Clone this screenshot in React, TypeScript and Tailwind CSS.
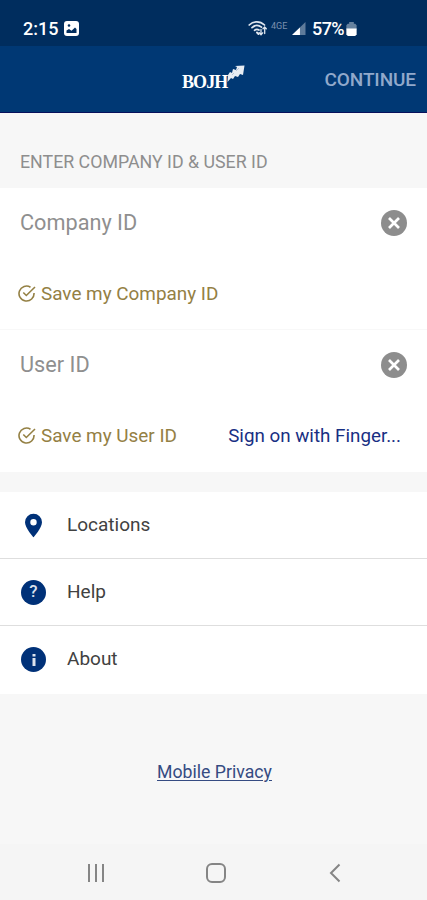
import type { ReactNode } from "react";

function StatusBar() {
  return (
    <div className="flex h-[46px] items-center bg-[#002d5e] pt-[11px] pl-[23px] text-white">
      <span className="w-[41px] text-[18px] font-medium whitespace-nowrap">2:15</span>
      <svg className="h-[15px] w-[15px]" viewBox="0 0 15 15">
        <rect width="15" height="15" rx="3" fill="#fff" />
        <circle cx="5" cy="4.5" r="1.3" fill="#002d5e" />
        <path d="M2.5 12V9.5L5 8l2.5 1.8L11 6.500l1.500 1.500V12z" fill="#002d5e" />
      </svg>
      <svg className="ml-[169px] h-[17px] w-[19px]" viewBox="0 0 19 17" fill="none" stroke="#dfe6ef" strokeLinecap="round">
        <path d="M1.200 5C5.500.8 12 .8 16.500 5M4 7.700c3-2.800 6.500-2.800 9.500-.5M6.500 10.300c1.500-1.300 3-1.300 4.500-.3" strokeWidth="1.700" />
        <path d="m9 12.500 1.500 1.500" strokeWidth="2" />
        <path d="M13 14.500v-5m-1.800 3.300 1.800 2 1.700-2M16.700 7v6.500M15 8.700 16.700 7l1.600 1.700" strokeWidth="1.300" />
      </svg>
      <span className="ml-[4px] h-[17px] w-[21px] text-[9px] leading-[12px] text-[#7c90ae]">4GE</span>
      <svg className="h-[13px] w-[14px]" viewBox="0 0 15 14">
        <path d="M0 14 14.500 0v14z" fill="#5e7b9b" />
        <path d="M0 14 8.500 5.800V14z" fill="#fff" />
      </svg>
      <span className="ml-[6px] w-[34px] text-[18px] font-medium tracking-[-0.6px] whitespace-nowrap">57%</span>
      <svg className="h-[14px] w-[11px]" viewBox="0 0 11 15">
        <path d="M3 0h5v2h1.500L11 3.500V8H0V3.500L1.500 2H3z" fill="#66829f" />
        <path d="M0 7h11v6l-1.500 2h-8L0 13z" fill="#fff" />
      </svg>
    </div>
  );
}

function Header() {
  return (
    <header className="flex h-[67px] items-center justify-between border-b border-[#08105b] bg-[#003874] pr-[11px] pl-[182px]">
      <div className="relative h-[36px] w-[64px] text-white">
        <span className="absolute top-[11px] left-0 font-['Liberation_Serif'] text-[18px] leading-[20px] font-bold tracking-[-0.9px]">
          BOJH
        </span>
        <svg className="absolute top-[4px] left-[45px] h-[17px] w-[18px]" viewBox="0 0 18 17" fill="#e6ecf3">
          <path d="m8 1 9.500-.5L16 10l-3-1-2 3-3-1-2 3-2-1-3.500 4L1 10l2-3 2 1 1-4 3 1 1-3z" />
          <path d="m9 6 3-3M5 10l2-2" stroke="#9fb3cc" strokeWidth=".7" />
        </svg>
      </div>
      <span className="pt-[2px] text-[19px] font-medium tracking-[-0.1px] text-[#91a9cb]">CONTINUE</span>
    </header>
  );
}

function Field({ label }: { label: string }) {
  return (
    <div className="flex h-[70px] items-center justify-between pr-[20px] pl-[20px]">
      <span className="pt-[1px] text-[21.7px] text-[#8f8f8f]">{label}</span>
      <svg className="h-[26px] w-[26px]" viewBox="0 0 26 26">
        <circle cx="13" cy="13" r="13" fill="#8d8d8d" />
        <path d="m8 8 10 10m0-10L8 18" stroke="#fff" strokeWidth="2.700" />
      </svg>
    </div>
  );
}

function SaveOption({ label }: { label: string }) {
  return (
    <div className="flex items-center gap-[5px] text-[#948044]">
      <svg className="h-[18px] w-[18px]" viewBox="0 0 18 18" fill="none" stroke="currentColor" strokeWidth="1.600">
        <path d="M12.500 2.200A7.500 7.500 0 1 0 16 8" />
        <path d="m5.300 7.500 3 3L17 2" />
      </svg>
      <span className="text-[18.900px] whitespace-nowrap">{label}</span>
    </div>
  );
}

function MenuRow({ icon, label }: { icon: ReactNode; label: string }) {
  return (
    <div className="flex h-[67px] items-center pl-[21px]">
      <div className="flex w-[46px]">{icon}</div>
      <span className="text-[19px] text-[#414141]">{label}</span>
    </div>
  );
}

function InfoCircle({ children }: { children: ReactNode }) {
  return (
    <div className="flex h-[25px] w-[25px] items-center justify-center rounded-full bg-[#003178] text-[#dce3ed]">
      {children}
    </div>
  );
}

function NavigationBar() {
  return (
    <nav className="flex h-[56px] items-center bg-[#f5f5f5] pt-[1px] pl-[87px] text-[#858585]">
      <svg className="h-[20px] w-[18px]" viewBox="0 0 18 20" stroke="currentColor" strokeWidth="2">
        <path d="M2 1v18M9 1v18M16 1v18" />
      </svg>
      <div className="ml-[101px] h-[20px] w-[20px] rounded-[6px] border-2 border-current" />
      <svg className="ml-[103px] h-[20px] w-[12px]" viewBox="0 0 12 20" fill="none" stroke="currentColor" strokeWidth="2">
        <path d="m10.500 1.500-8.500 8.500 8.500 8.500" />
      </svg>
    </nav>
  );
}

export default function App() {
  return (
    <div className="flex h-[900px] w-[427px] flex-col overflow-hidden bg-[#f7f7f7] font-[Roboto,sans-serif]">
      <StatusBar />
      <Header />
      <h1 className="flex h-[75px] items-center pt-[23px] pl-[20px] text-[17.8px] text-[#8e8e8e]">
        ENTER COMPANY ID &amp; USER ID
      </h1>
      <section className="h-[284px] bg-white">
        <Field label="Company ID" />
        <div className="flex h-[72px] items-center border-b border-[#f8f8f8] pt-[1px] pl-[18px]">
          <SaveOption label="Save my Company ID" />
        </div>
        <Field label="User ID" />
        <div className="flex h-[72px] items-center justify-between pr-[26px] pl-[18px]">
          <SaveOption label="Save my User ID" />
          <span className="text-[18.800px] text-[#182f83]">Sign on with Finger...</span>
        </div>
      </section>
      <section className="mt-[20px] h-[202px] divide-y divide-[#dedede] bg-white">
        <MenuRow
          label="Locations"
          icon={
            <svg className="ml-[4px] h-[25px] w-[17px]" viewBox="0 0 18 25">
              <path fillRule="evenodd" d="M9 0a9 9 0 0 1 9 9c0 6-9 16-9 16S0 15 0 9a9 9 0 0 1 9-9m0 5.600a3.400 3.400 0 1 0 0 6.800 3.400 3.400 0 0 0 0-6.800" fill="#003178" />
            </svg>
          }
        />
        <MenuRow label="Help" icon={<InfoCircle><span className="text-[17px] font-medium">?</span></InfoCircle>} />
        <MenuRow
          label="About"
          icon={
            <InfoCircle>
              <svg className="h-[12px] w-[4px]" viewBox="0 0 4 12" fill="currentColor">
                <path d="M.5 0h3v2.500h-3zM.5 4h3v8h-3z" />
              </svg>
            </InfoCircle>
          }
        />
      </section>
      <div className="flex flex-1 items-center justify-center pt-[6px] pl-[2px]">
        <span className="text-[17.700px] text-[#354b82] underline underline-offset-2">Mobile Privacy</span>
      </div>
      <NavigationBar />
    </div>
  );
}
